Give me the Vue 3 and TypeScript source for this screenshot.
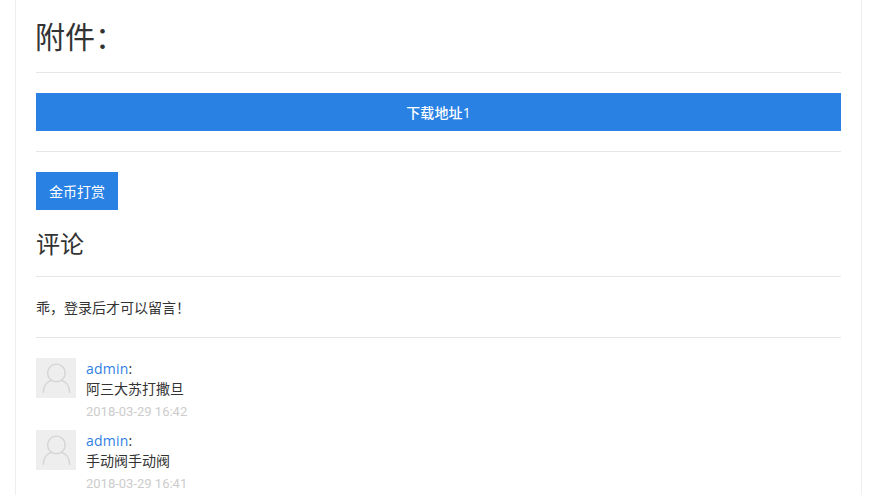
<script setup lang="ts">
interface Comment { name: string; text: string; time: string }
const comments: Comment[] = [
  { name: 'admin', text: '阿三大苏打撒旦', time: '2018-03-29 16:42' },
  { name: 'admin', text: '手动阀手动阀', time: '2018-03-29 16:41' },
]
</script>

<template>
  <div class="page">
    <main class="card">
      <h1 class="title">附件：</h1>
      <hr class="rule" />
      <a class="download">下载地址1</a>
      <hr class="rule" />
      <a class="reward">金币打赏</a>
      <h2 class="subtitle">评论</h2>
      <hr class="rule" />
      <p class="notice">乖，登录后才可以留言！</p>
      <hr class="rule" />
      <ul class="comments">
        <li v-for="c in comments" :key="c.time" class="comment">
          <div class="avatar">
            <svg viewBox="0 0 40 40" width="40" height="40" fill="none" stroke="#d4d4d4" stroke-width="1.4">
              <circle cx="20.4" cy="14.9" r="8.8" />
              <path d="M7.200 34.700C7.200 28 11 23.500 15.800 22.200M33.700 34.700C33.700 28 29.900 23.500 25.100 22.200" />
            </svg>
          </div>
          <div class="body">
            <div class="author"><a class="name">{{ c.name }}</a>:</div>
            <div class="text">{{ c.text }}</div>
            <div class="time">{{ c.time }}</div>
          </div>
        </li>
      </ul>
    </main>
  </div>
</template>

<style>
html, body { margin: 0; background: #fff; overflow: hidden; }
</style>

<style scoped>
.page {
  height: 495px;
  overflow: hidden;
  padding-left: 15px;
  font-family: "Open Sans", "Noto Sans CJK SC", sans-serif;
  font-size: 14px;
  color: #333;
}
.card {
  box-sizing: border-box;
  width: 847px;
  padding: 0 20px;
  border-left: 1px solid #eee;
  border-right: 1px solid #eee;
  height: 100%;
}
.title {
  margin: 0 0 0 -1px;
  height: 72px;
  box-sizing: border-box;
  padding-top: 14px;
  font-size: 30px;
  font-weight: 400;
  line-height: 46px;
}
.rule {
  margin: 0;
  border: 0;
  border-top: 1px solid #e6e6e6;
}
.download {
  display: block;
  height: 38px;
  margin: 20px 0;
  background: #2981e4;
  color: #fff;
  text-align: center;
  line-height: 40px;
  font-weight: 500;
  letter-spacing: 0.1px;
}
.reward {
  display: inline-block;
  height: 38px;
  margin-top: 20px;
  padding: 0 13px;
  background: #2981e4;
  color: #fff;
  line-height: 40px;
  vertical-align: top;
}
.subtitle {
  margin: 0;
  height: 66px;
  font-size: 24px;
  font-weight: 400;
  line-height: 68px;
}
.notice {
  margin: 0;
  height: 60px;
  line-height: 62px;
}
.comments {
  list-style: none;
  margin: 20px 0 0;
  padding: 0;
}
.comment {
  display: flex;
  gap: 10px;
  height: 72px;
}
.avatar {
  width: 40px;
  height: 40px;
  background: #eee;
  flex: none;
}
.avatar svg { display: block; }
.body { line-height: 21px; }
.name { color: #2f7fe4; letter-spacing: 0.2px; }
.text { margin-top: -1px; }
.time {
  margin-top: 2px;
  font-family: Roboto, sans-serif;
  font-size: 13px;
  color: #ccc;
}
</style>
